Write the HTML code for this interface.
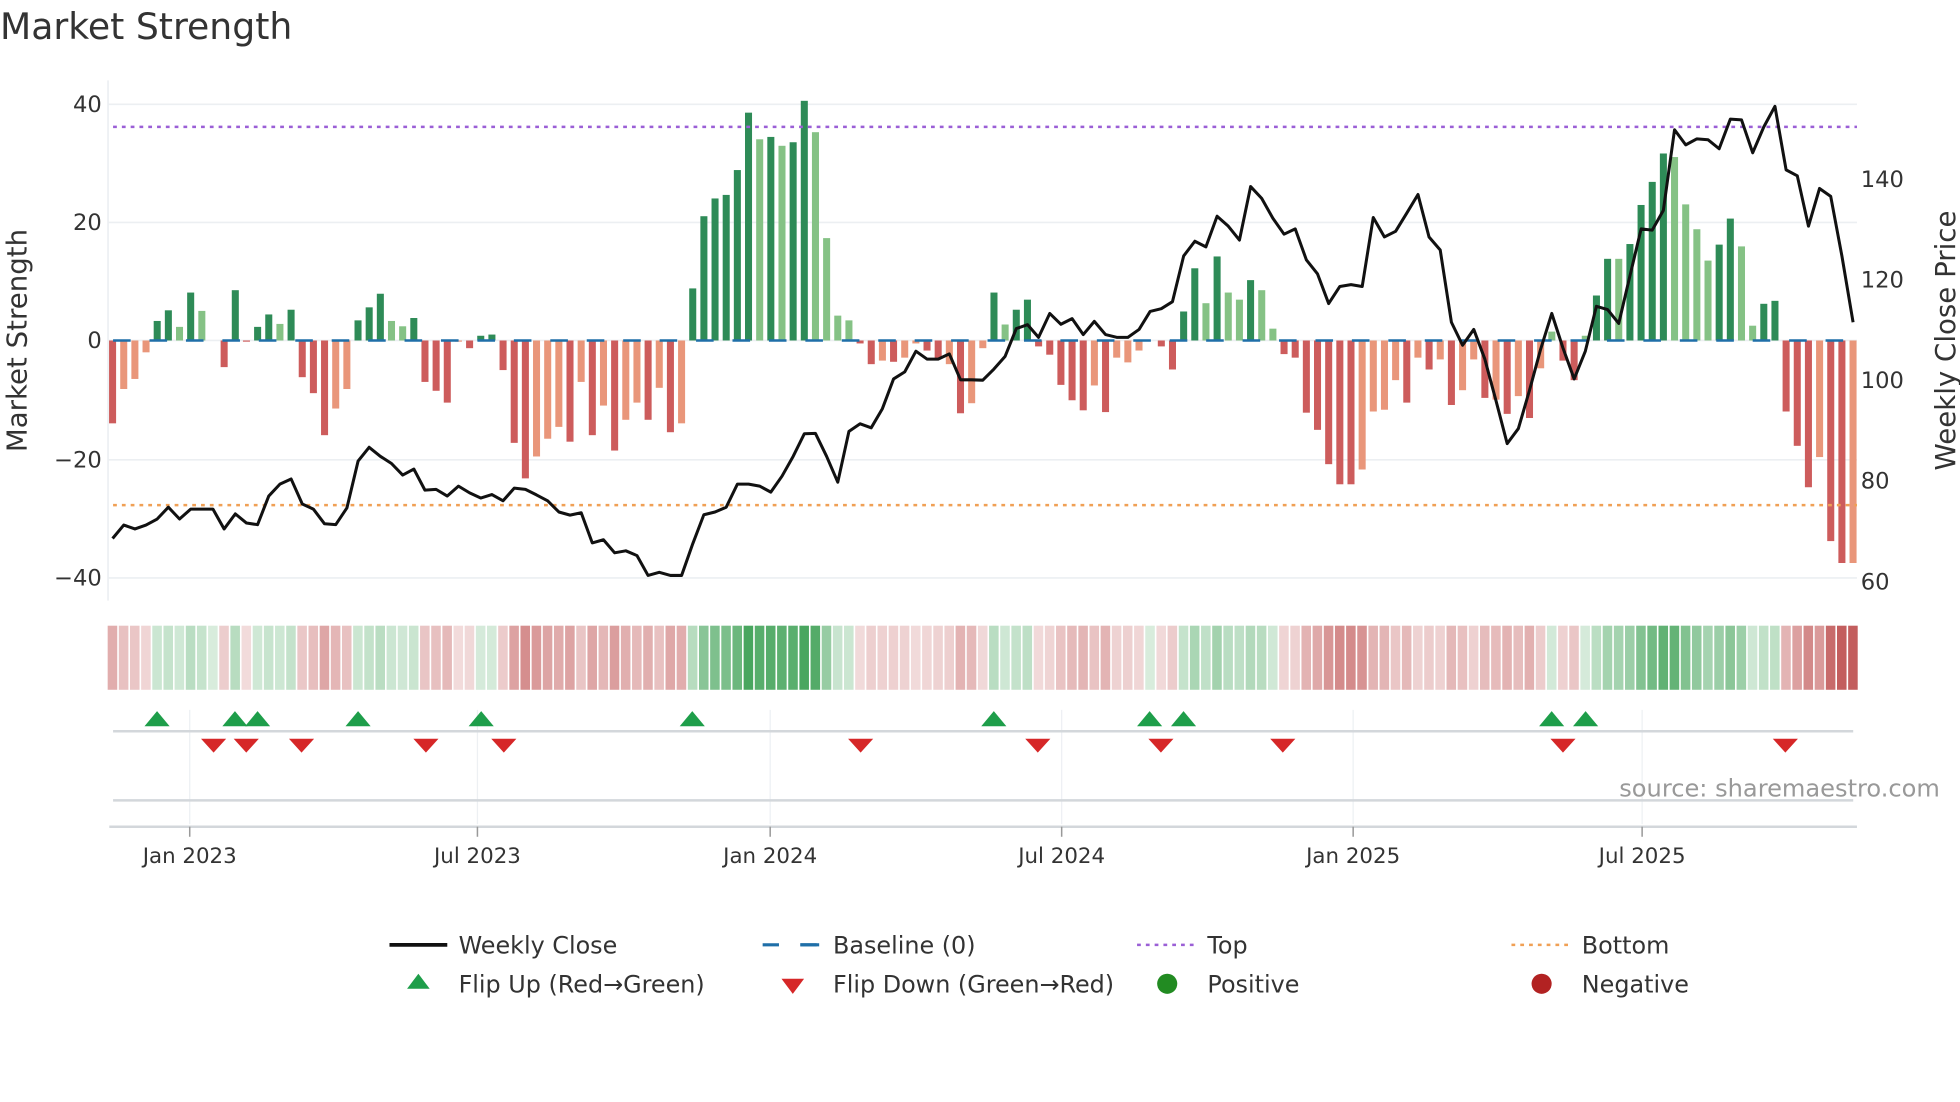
<!DOCTYPE html>
<html><head><meta charset="utf-8"><style>
html,body{margin:0;padding:0;background:#fff;width:1960px;height:1102px;overflow:hidden}
svg{display:block}
text{font-family:"DejaVu Sans","Liberation Sans",sans-serif;fill:#333}
</style></head><body>
<svg id="c" width="1960" height="1102" viewBox="0 0 1560 877.1" preserveAspectRatio="none" xmlns="http://www.w3.org/2000/svg">
<text x="0" y="31" font-size="28.8">Market Strength</text>
<g stroke="#eceff2" stroke-width="1.3">
<line x1="86" y1="83" x2="1478" y2="83"/><line x1="86" y1="177" x2="1478" y2="177"/><line x1="86" y1="271" x2="1478" y2="271"/><line x1="86" y1="366" x2="1478" y2="366"/><line x1="86" y1="460" x2="1478" y2="460"/>
<line x1="86" y1="64" x2="86" y2="478"/>
</g>
<g font-size="18" text-anchor="end">
<text x="81" y="89">40</text><text x="81" y="183">20</text><text x="81" y="277">0</text><text x="81" y="372">−20</text><text x="81" y="466">−40</text>
</g>
<g font-size="18">
<text x="1481" y="149">140</text><text x="1481" y="229">120</text><text x="1481" y="309">100</text><text x="1481" y="389">80</text><text x="1481" y="469">60</text>
</g>
<text transform="translate(21,271) rotate(-90)" font-size="22" text-anchor="middle">Market Strength</text>
<text transform="translate(1556,271) rotate(-90)" font-size="22" text-anchor="middle">Weekly Close Price</text>
<g id="bars"></g>
<line x1="90" y1="101" x2="1478" y2="101" stroke="#9b5fd6" stroke-width="2" stroke-dasharray="3,4"/>
<line x1="90" y1="402" x2="1478" y2="402" stroke="#f0a055" stroke-width="2" stroke-dasharray="3,4"/>
<line x1="90" y1="271" x2="1478" y2="271" stroke="#1f6fa8" stroke-width="2" stroke-dasharray="14,15"/>
<polyline id="ln" fill="none" stroke="#111" stroke-width="2.4" stroke-linejoin="round"/>
<g id="strip"></g>
<g stroke="#edf0f3" stroke-width="1">
<line x1="151" y1="565" x2="151" y2="656"/><line x1="380" y1="565" x2="380" y2="656"/><line x1="613" y1="565" x2="613" y2="656"/><line x1="845" y1="565" x2="845" y2="656"/><line x1="1077" y1="565" x2="1077" y2="656"/><line x1="1307" y1="565" x2="1307" y2="656"/>
</g>
<line x1="90" y1="582" x2="1475" y2="582" stroke="#d3d7db" stroke-width="2"/>
<line x1="90" y1="637" x2="1475" y2="637" stroke="#d3d7db" stroke-width="2"/>
<line x1="87" y1="658" x2="1478" y2="658" stroke="#d3d7db" stroke-width="2"/>
<g stroke="#999" stroke-width="1.2">
<line x1="151" y1="658" x2="151" y2="666"/><line x1="380" y1="658" x2="380" y2="666"/><line x1="613" y1="658" x2="613" y2="666"/><line x1="845" y1="658" x2="845" y2="666"/><line x1="1077" y1="658" x2="1077" y2="666"/><line x1="1307" y1="658" x2="1307" y2="666"/>
</g>
<g id="flips"></g>
<text x="1544" y="634" font-size="19.2" text-anchor="end" style="fill:#999">source: sharemaestro.com</text>
<g font-size="17" text-anchor="middle">
<text x="151" y="687">Jan 2023</text><text x="380" y="687">Jul 2023</text><text x="613" y="687">Jan 2024</text><text x="845" y="687">Jul 2024</text><text x="1077" y="687">Jan 2025</text><text x="1307" y="687">Jul 2025</text>
</g>
<g font-size="19">
<line x1="310" y1="752" x2="356" y2="752" stroke="#111" stroke-width="3"/>
<text x="365" y="759">Weekly Close</text>
<line x1="607" y1="752" x2="652" y2="752" stroke="#1f6fa8" stroke-width="2.5" stroke-dasharray="13,17"/>
<line x1="637" y1="752" x2="652" y2="752" stroke="#1f6fa8" stroke-width="2.5"/>
<text x="663" y="759">Baseline (0)</text>
<line x1="905" y1="752" x2="950" y2="752" stroke="#9b5fd6" stroke-width="2" stroke-dasharray="3,4"/>
<text x="961" y="759">Top</text>
<line x1="1203" y1="752" x2="1248" y2="752" stroke="#f0a055" stroke-width="2" stroke-dasharray="3,4"/>
<text x="1259" y="759">Bottom</text>
<polygon points="333,775 342,787 324,787" fill="#1e9e4a"/>
<text x="365" y="790">Flip Up (Red→Green)</text>
<polygon points="622,779 640,779 631,791" fill="#d62728"/>
<text x="663" y="790">Flip Down (Green→Red)</text>
<circle cx="929" cy="783" r="8" fill="#228b22"/>
<text x="961" y="790">Positive</text>
<circle cx="1227" cy="783" r="8" fill="#b22222"/>
<text x="1259" y="790">Negative</text>
</g>
</svg>
<script>
var v=[-14,-8.2,-6.5,-2,3.3,5.1,2.3,8.1,5,0,-4.5,8.5,-0.2,2.3,4.4,2.8,5.2,-6.2,-8.9,-16,-11.5,-8.2,3.4,5.6,7.9,3.3,2.4,3.8,-7,-8.5,-10.5,-0.2,-1.3,0.8,1,-5,-17.3,-23.3,-19.6,-16.6,-14.6,-17.1,-7,-16,-11,-18.6,-13.4,-10.5,-13.4,-8,-15.5,-14,8.8,21,24,24.6,28.8,38.5,34,34.4,32.9,33.5,40.5,35.2,17.3,4.2,3.4,-0.5,-4,-3.4,-3.6,-2.9,-0.5,-1.7,-3.1,-4,-12.3,-10.6,-1.3,
8.1,2.7,5.2,6.9,-1,-2.4,-7.5,-10.1,-11.8,-7.6,-12.1,-2.9,-3.7,-1.7,0,-1,-4.9,4.9,12.2,6.3,14.2,8.1,6.9,10.2,8.5,2,-2.3,-2.9,-12.2,-15.1,-20.9,-24.3,-24.3,-21.8,-12,-11.7,-6.7,-10.5,-2.9,-4.9,-3.2,-10.9,-8.4,-3.2,-9.7,-10,-12.4,-9.4,-13.1,-4.7,1.5,-3.4,-6.7,0.8,7.6,13.8,13.8,16.3,22.9,26.8,31.6,31,23,18.8,13.5,16.2,20.6,15.9,2.5,6.2,6.7,-12,-17.8,-24.8,-19.7,-33.9,-37.6,-37.6];
var s="DLLLDDLDLDDDDDDLDDDDLLDDDLLDDDDLDDDDDDLLLDLDLDLLDLDLDDDDDDLDLDDLLLLDDLDLLDDLDLL"+"DLDDDDDDDLDLLLDDDDDLDLLDLLDDDDDDDLLLLDLDLDLLDLDLDLLDDLDDLDDDDLLLLDDLLDDDDDLDDL";
var ly=[1357,1323,1333,1323,1308,1278,1308,1283,1283,1283,1333,1295,1318,1322,1250,1220,1207,1270,1283,1320,1322,1280,1162,1127,1150,1168,1197,1182,1235,1233,1250,1225,1242,1255,1246,1262,1230,1233,1247,1262,1290,1298,1292,1368,1360,1393,1388,1400,1450,1442,1450,1450,1370,1297,1290,1278,1220,1220,1225,1240,1200,1150,1093,1092,1150,1215,1087,1068,1078,1030,955,937,885,905,905,892,957,957,958,
930,898,828,818,850,790,817,803,843,810,843,850,850,830,785,778,760,645,608,622,545,570,605,470,500,550,590,577,655,690,765,722,717,722,548,597,583,537,490,597,630,812,870,830,905,1010,1118,1080,983,880,790,877,955,885,772,780,815,695,577,580,530,327,365,350,352,375,300,302,385,320,268,428,443,570,475,495,645,812];
var NS="http://www.w3.org/2000/svg";
function el(p,n,a){var e=document.createElementNS(NS,n);for(var k in a)e.setAttribute(k,a[k]);p.appendChild(e);return e;}
var bars=document.getElementById('bars'),strip=document.getElementById('strip'),fl=document.getElementById('flips');
var pts=[];
function mix(c,t){var r=Math.round(255+(c[0]-255)*t),g=Math.round(255+(c[1]-255)*t),b=Math.round(255+(c[2]-255)*t);return 'rgb('+r+','+g+','+b+')';}
for(var i=0;i<v.length;i++){
 var x=89.6+i*8.88,val=v[i],d=s[i]=='D';
 var col=val>=0?(d?'#2e8b57':'#85c285'):(d?'#cd5c5c':'#e9967a');
 var h=Math.abs(val)*4.71;
 if(h>0.3) el(bars,'rect',{x:x-2.8,y:val>=0?271-h:271,width:5.6,height:h,fill:col});
 pts.push(x.toFixed(1)+','+(ly[i]/3.166).toFixed(1));
 var t=0.22+0.8*Math.min(Math.abs(val)/38,1);
 el(strip,'rect',{x:x-3.9,y:498,width:7.6,height:51,fill:val>=0?mix([77,168,98],t):mix([196,96,96],t)});
}
document.getElementById('ln').setAttribute('points',pts.join(' '));
[125,187,205,285,383,551,791,915,942,1235,1262].forEach(function(x){el(fl,'polygon',{points:(x)+',566 '+(x+10)+',578 '+(x-10)+',578',fill:'#1e9e4a'});});
[170,196,240,339,401,685,826,924,1021,1244,1421].forEach(function(x){el(fl,'polygon',{points:(x-10)+',588 '+(x+10)+',588 '+x+',599',fill:'#d62728'});});
</script>
</body></html>
